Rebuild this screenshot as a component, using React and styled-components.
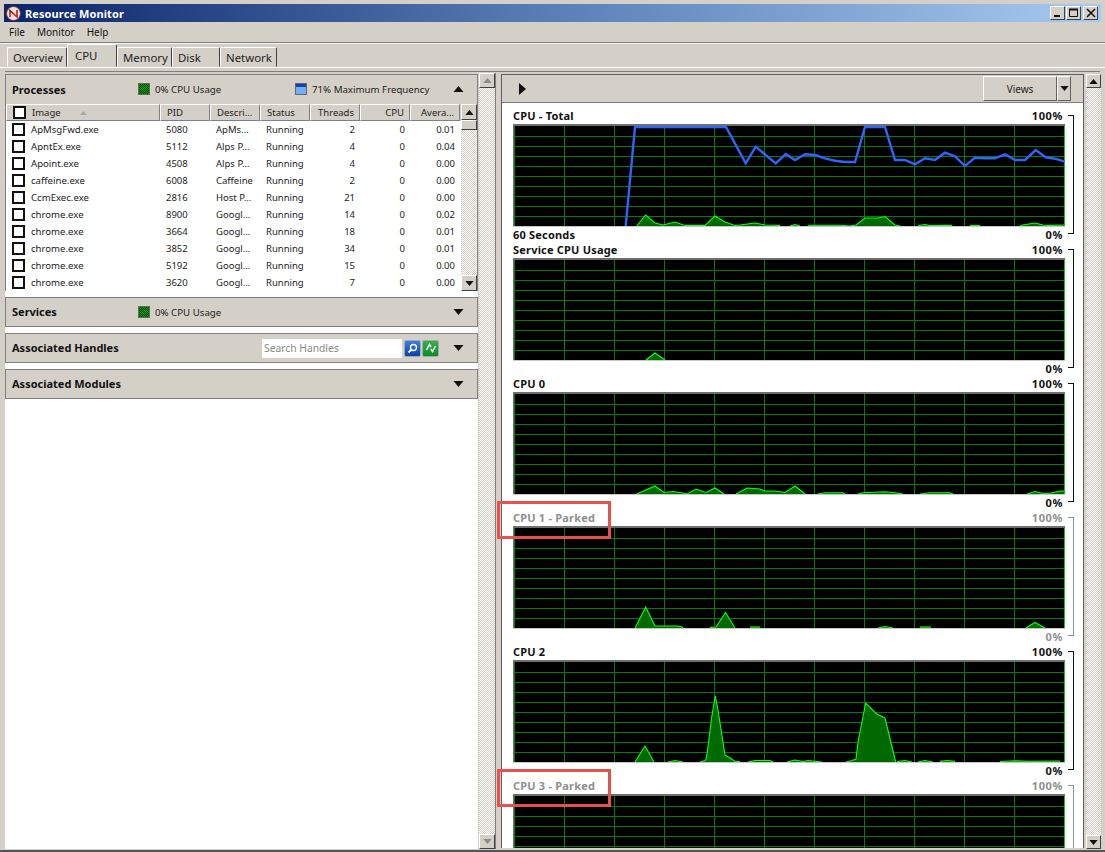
import React from "react";
import styled, { createGlobalStyle } from "styled-components";

const Global = createGlobalStyle`
  html, body { margin: 0; padding: 0; background: #d4d0c8; }
  * { box-sizing: border-box; }
`;
const FACE = "#d4d0c8";
const checker = `repeating-conic-gradient(#d4d0c8 0 25%, #ffffff 0 50%) 0 0 / 2px 2px`;

const Window = styled.div`
  width: 1105px; height: 852px; overflow: hidden; position: relative;
  background: ${FACE}; padding-top: 4px; display: flex; flex-direction: column;
  font-family: "Noto Sans", "Liberation Sans", sans-serif; font-size: 10.5px; color: #111;
  border-bottom: 2px solid #555;
`;
const TitleBar = styled.div`
  height: 18px; margin: 0 4px; flex: none; display: flex; align-items: center; padding: 0 2px;
  background: linear-gradient(90deg, #0a246a 0%, #5a7fb8 50%, #a6caf0 100%);
`;
const TitleText = styled.span`
  margin-left: 4px; color: #fff; font: bold 11px "Noto Sans", sans-serif; letter-spacing: 0.1px; flex: 1;
`;
const CaptionButton = styled.button`
  width: 15px; height: 14px; padding: 0; margin-right: ${p => p.$gap || 1}px; background: ${FACE};
  border: 1px solid; border-color: #fff #404040 #404040 #fff; display: flex; align-items: center; justify-content: center;
`;
const MenuBar = styled.div`
  height: 20px; flex: none; display: flex; align-items: center; padding-left: 9px; gap: 12px; font-size: 10px;
`;
const Separator = styled.div`
  height: 2px; flex: none; background: #808080; border-bottom: 1px solid #f4f2ee;
`;
const TabStrip = styled.div`
  height: 24px; flex: none; display: flex; align-items: flex-end; padding-left: 7px; border-bottom: 1px solid #fff;
`;
const Tab = styled.div`
  width: ${p => p.$w}px; height: ${p => p.$active ? 23 : 20}px; background: ${FACE};
  border: 1px solid; border-color: #fff #404040 ${FACE} #fff; border-radius: 2px 2px 0 0;
  padding: ${p => p.$active ? "3px 0 0 7px" : "2px 0 0 5px"}; font-size: 11.4px; line-height: 15px; color: #222;
`;
const Content = styled.div`
  flex: 1; min-height: 0; display: flex; padding: 5px 5px 1px 5px; position: relative;
  &::before { content: ""; position: absolute; left: 5px; right: 5px; top: 3px; height: 1px; background: #808080; }
`;
const LeftColumn = styled.div`
  width: 473px; flex: none; background: #fff; display: flex; flex-direction: column; gap: 6px; margin-top: 1px;
`;
const PanelHeader = styled.div`
  height: ${p => p.$h || 30}px; flex: none; display: flex; align-items: center; background: ${FACE};
  border: 1px solid #808080; padding: 0 13px 0 6px; ${p => p.$flat && "border-width: 1px 1px 0 1px;"}
`;
const PanelTitle = styled.span`
  font: bold 11px "Noto Sans", sans-serif; width: ${p => p.$w ? p.$w + "px" : "auto"}; color: #111; flex: none;
  margin-bottom: ${p => p.$raised ? 2 : 0}px;
`;
const Swatch = styled.span`
  width: 12px; height: 12px; flex: none; margin-right: 5px; border: 1px solid #666;
  background: ${p => p.$blue
    ? "linear-gradient(#1a3cb0 0 3px, #6fb0f5 3px)"
    : "repeating-conic-gradient(#004a00 0 25%, #00a000 0 50%) 0 0 / 2px 2px"};
`;
const Meter = styled.span`
  width: ${p => p.$w}px; flex: none; font-size: 9.7px; color: #222; white-space: nowrap;
`;
const Spring = styled.span`flex: 1;`;
const Gap = styled.span`flex: none; width: ${p => p.$w}px;`;
const Processes = styled.div`
  flex: none; display: flex; flex-direction: column; border-bottom: 1px solid #808080;
`;
const TableFrame = styled.div`
  display: grid; grid-template-columns: 1fr 16px; height: 187px;
  border: 1px solid #808080; border-width: 0 1px; padding-top: 1px; background: ${FACE};
`;
const TableBody = styled.div`background: #fff; min-width: 0;`;
const Cols = "154px 50px 50px 50px 50px 50px 50px";
const HeadRow = styled.div`
  display: grid; grid-template-columns: ${Cols}; height: 17px; background: ${FACE};
`;
const HeadCell = styled.div`
  display: flex; align-items: center; padding: 0 5px 0 6px; font-size: 9.5px; color: #222; white-space: nowrap;
  border: 1px solid; border-color: #fff #808080 #808080 #fff; justify-content: ${p => p.$right ? "flex-end" : "flex-start"};
`;
const Row = styled.div`
  display: grid; grid-template-columns: ${Cols}; height: 17px; align-items: center; background: #fff;
`;
const Cell = styled.div`
  padding: 0 5px 0 6px; font-size: 9.5px; color: #1c1c1c; white-space: nowrap; text-align: ${p => p.$right ? "right" : "left"};
`;
const NameCell = styled.div`
  display: flex; align-items: center; padding-left: 6px; font-size: 9.6px; color: #1c1c1c;
`;
const Check = styled.span`
  width: 13px; height: 13px; border: 2px solid #111; background: #fff; margin-right: 6px; flex: none;
`;
const SortArrow = styled.svg`margin-left: 19px;`;
const ScrollV = styled.div`
  display: flex; flex-direction: column; background: ${checker}; width: ${p => p.$w || 16}px; flex: none;
`;
const ScrollBtn = styled.div`
  height: ${p => p.$h || 16}px; flex: none; background: ${FACE}; display: flex; align-items: center; justify-content: center;
  border: 1px solid; border-color: #fff #404040 #404040 #fff;
`;
const ScrollFill = styled.div`flex: 1;`;
const SearchBox = styled.div`
  width: 140px; height: 19px; background: #fff; margin-right: 1px; padding-left: 2px;
  font-size: 10.3px; color: #8a8a8a; display: flex; align-items: center; flex: none;
`;
const SquareIcon = styled.span`
  width: 17px; height: 17px; flex: none; margin-left: 1px; border-radius: 2px; border: 1px solid #9ab;
  background: ${p => p.$green ? "linear-gradient(#37b24a,#0f8a22)" : "linear-gradient(#3d7ee0,#0f3fa8)"};
  display: flex; align-items: center; justify-content: center;
`;
const LeftScroll = styled(ScrollV)`
  margin-left: 1px; border-right: 1px solid #808080; width: 17px;
`;
const RightPane = styled.div`
  width: 583px; flex: none; margin: 1px 0 0 5px; background: #fff;
  border: 1px solid #5e5e5e; border-width: 1px 1px 0 1px; overflow: hidden; height: 774px; display: flex; flex-direction: column;
`;
const PaneBar = styled.div`
  height: 28px; flex: none; background: ${FACE}; border-bottom: 1px solid #808080; display: flex; align-items: center;
  padding: 0 12px 0 17px;
`;
const ViewsButton = styled.div`
  margin-left: auto; display: flex; height: 25px; font-size: 10px; color: #222;
`;
const ViewsMain = styled.div`
  width: 74px; display: flex; align-items: center; justify-content: center; background: ${FACE};
  border: 1px solid; border-color: #fff #606060 #606060 #fff;
`;
const ViewsDrop = styled.div`
  width: 14px; display: flex; align-items: center; justify-content: center; background: ${FACE};
  border: 1px solid; border-color: #fff #606060 #606060 #fff;
`;
const GraphList = styled.div`
  padding: 4px 0 0 11px; flex: 1; min-height: 0; overflow: hidden;
`;
const GraphBlock = styled.div`
  height: 134px; display: grid; grid-template-columns: 552px 6px; column-gap: 3px;
`;
const GraphMain = styled.div`display: flex; flex-direction: column;`;
const GraphLine = styled.div`
  height: ${p => p.$h}px; display: flex; justify-content: space-between; align-items: center; padding-right: 2px;
  font: bold 11px/12px "Noto Sans", sans-serif; letter-spacing: 0.2px; color: ${p => p.$parked ? "#8f8f8f" : "#111"};
  padding-top: ${p => p.$down ? 2 : 0}px;
`;
const Pct = styled.span`letter-spacing: 0.6px;`;
const Axis = styled.div`
  margin-top: 8px; height: 119px; border: 1px solid ${p => p.$parked ? "#8f8f8f" : "#111"}; border-left: 0;
`;
const Plot = styled.svg`display: block; flex: none;`;
const RightScroll = styled(ScrollV)`margin-left: 2px; margin-top: 1px; height: 775px;`;
const Callout = styled.div`
  position: absolute; left: 497px; top: ${p => p.$top}px; width: 114px; height: 38px;
  border: 3px solid #e8504c; pointer-events: none;
`;

const Tri = ({ up, c = "#111", w = 11, h = 6 }) => (
  <svg width={w} height={h} viewBox="0 0 10 6" style={{ display: "block", flex: "none" }}>
    <polygon points={up ? "5,0 10,6 0,6" : "0,0 10,0 5,6"} fill={c} />
  </svg>
);

const rows = [
  ["ApMsgFwd.exe", "5080", "ApMs...", "2", "0.01"],
  ["ApntEx.exe", "5112", "Alps P...", "4", "0.04"],
  ["Apoint.exe", "4508", "Alps P...", "4", "0.00"],
  ["caffeine.exe", "6008", "Caffeine", "2", "0.00"],
  ["CcmExec.exe", "2816", "Host P...", "21", "0.00"],
  ["chrome.exe", "8900", "Googl...", "14", "0.02"],
  ["chrome.exe", "3664", "Googl...", "18", "0.01"],
  ["chrome.exe", "3852", "Googl...", "34", "0.01"],
  ["chrome.exe", "5192", "Googl...", "15", "0.00"],
  ["chrome.exe", "3620", "Googl...", "7", "0.00"],
];

const blueTotal = [[625.7,226],[635,127],[726,127],[745.7,163.3],[755.7,146.7],[775.7,163.3],[785.7,154],[795,160],[805,154.3],[815,155],[825,158.3],[835,160.7],[845,162],[855,162],[865,127],[885,127],[895,160],[905,160],[915,164.3],[925,158.3],[935,160],[945,152.7],[955,156.3],[965,166],[975,157.7],[985,158.3],[995,158.3],[1005,154.3],[1015,160],[1025,160],[1035.7,150],[1045.7,157.3],[1055,158.7],[1065,161.7]];

const graphs = [
  { label: "CPU - Total", footer: "60 Seconds", blue: blueTotal, segs: [
    [[636.7,0],[645.7,11],[655,3],[663,1],[675,4],[685,.6],[705,.6],[715,10],[725,4],[735,.6],[740,1],[755,3],[765,1],[780,.6]],
    [[790,0],[795,1.5],[800,0]],
    [[808,.8],[840,.8],[850,0],[856,1],[865,8],[878,8],[885,9.5],[895,1],[900,0]],
    [[918,.5],[925,1.5],[930,.5],[945,.6],[952,.6]],
    [[970,.6],[980,.6]],
    [[1020,.5],[1035,3],[1043,1],[1048,.6],[1065,1]],
  ]},
  { label: "Service CPU Usage", segs: [[[646,0],[655,7],[665,0]]] },
  { label: "CPU 0", segs: [
    [[636.7,0],[655,8],[664,1.5],[673,2.5],[683,1],[687,0],[696,5],[706,1.5],[715,6],[724,0]],
    [[736,0],[747,6],[760,5],[765,3],[775,3],[785,1.5],[795,8],[805,0]],
    [[818,0],[825,1.2],[843,1.2],[845,0]],
    [[858,0],[863,1.2],[885,2.2],[895,1.2],[903,0]],
    [[920,0],[930,1.2],[950,1.2],[953,0]],
    [[1027,0],[1035,2.5],[1042,.8],[1050,.8],[1060,3],[1065,3]],
  ]},
  { label: "CPU 1 - Parked", parked: true, segs: [
    [[635,0],[645.7,21],[655,2],[678,2],[683,.6]],
    [[710,.6],[716,1],[725.5,15.5],[735,0]],
    [[750,1],[760,1]],
    [[878,0],[885,1.5],[893,0]],
    [[920,1],[931,1]],
    [[1026,0],[1035,5.5],[1045,0]],
  ]},
  { label: "CPU 2", segs: [
    [[635,0],[645,16],[654,0]],
    [[668,0],[675,1.5],[683,0]],
    [[700,0],[705,1.5],[706,3],[707.3,10],[711.7,45],[715.3,66],[718.3,50],[725,7],[730,4],[735,.8],[740,.4]],
    [[748,0],[755,1.5],[770,1.5],[773,0]],
    [[787,0],[795,2],[803,.5],[808,1.5],[822,0]],
    [[846,0],[852,1.5],[856,3],[858,20],[865.7,59],[876.7,48],[885,44],[895.7,0]],
    [[897,.5],[905,1.5],[912,0]],
    [[918,0],[925,1.5],[933,0]],
    [[940,.6],[947,1.5],[955,.6]],
    [[1000,.5],[1015,1.2],[1030,.8],[1060,1]],
  ]},
  { label: "CPU 3 - Parked", parked: true, clipped: true, segs: [] },
];

const vLines = Array.from({ length: 12 }, (_, i) => 1.5 + i * 50);
const hLines = Array.from({ length: 10 }, (_, i) => 2.5 + i * 10).slice(1);

const CpuPlot = ({ segs, blue }) => (
  <Plot width="552" height="103" viewBox="0 0 552 103">
    <rect width="552" height="103" fill="#000" />
    <g stroke="#057d05" strokeWidth="1" shapeRendering="crispEdges">
      {vLines.map(x => <line key={x} x1={x} x2={x} y1="0" y2="103" />)}
      {hLines.map(y => <line key={y} x1="0" x2="552" y1={y} y2={y} />)}
    </g>
    {segs.map((s, i) => {
      const pts = s.map(([x, h]) => `${(x - 513).toFixed(1)},${(102 - h).toFixed(1)}`);
      const first = s[0][0] - 513, last = s[s.length - 1][0] - 513;
      return (
        <g key={i}>
          <polygon points={`${first},102 ${pts.join(" ")} ${last},102`} fill="#006a00" />
          <polyline points={pts.join(" ")} fill="none" stroke="#12ff12" strokeWidth="1.1" />
        </g>
      );
    })}
    <line x1="551.5" x2="551.5" y1="0" y2="103" stroke="#16c416" shapeRendering="crispEdges" />
    {blue && (
      <polyline points={blue.map(([x, y]) => `${x - 513},${y - 124}`).join(" ")} fill="none" stroke="#3163ff" strokeWidth="2.4" />
    )}
    <rect x="0" y="0" width="552" height="2" fill="#6f6f6f" />
    <rect x="0" y="0" width="1" height="103" fill="#6f6f6f" />
    <rect x="0" y="102" width="552" height="1" fill="#c8c8c8" />
  </Plot>
);

const Graph = ({ g }) => (
  <GraphBlock>
    <GraphMain>
      <GraphLine $h={17} $parked={g.parked}><span>{g.label}</span><Pct>100%</Pct></GraphLine>
      <CpuPlot segs={g.segs} blue={g.blue} />
      {!g.clipped && (
        <GraphLine $h={14} $down $parked={g.parked}><span>{g.footer || ""}</span><Pct>0%</Pct></GraphLine>
      )}
    </GraphMain>
    <Axis $parked={g.parked} />
  </GraphBlock>
);

const LogoIcon = () => (
  <svg width="15" height="15" viewBox="0 0 15 15" style={{ flex: "none" }}>
    <circle cx="7.5" cy="7.5" r="7" fill="#e8e4de" stroke="#7a2a2a" strokeWidth=".9" />
    <path d="M4 11V4.5L11 11V4" fill="none" stroke="#c62020" strokeWidth="1.6" />
    <path d="M2.5 3.5L7 7" stroke="#333" strokeWidth=".8" />
  </svg>
);

export default function App() {
  return (
    <Window>
      <Global />
      <TitleBar>
        <LogoIcon />
        <TitleText>Resource Monitor</TitleText>
        <CaptionButton aria-label="Minimize">
          <svg width="10" height="10"><rect x="1" y="7" width="6" height="2" fill="#111" /></svg>
        </CaptionButton>
        <CaptionButton aria-label="Maximize" $gap={2}>
          <svg width="10" height="10"><path d="M.5 1.5h8v7h-8z" fill="none" stroke="#111" /><rect y="0.5" width="9" height="2" fill="#111" /></svg>
        </CaptionButton>
        <CaptionButton aria-label="Close" $gap={1}>
          <svg width="10" height="10"><path d="M1 1L9 9M9 1L1 9" stroke="#111" strokeWidth="1.6" /></svg>
        </CaptionButton>
      </TitleBar>
      <MenuBar><span>File</span><span>Monitor</span><span>Help</span></MenuBar>
      <Separator />
      <TabStrip>
        <Tab $w={60}>Overview</Tab>
        <Tab $w={50} $active>CPU</Tab>
        <Tab $w={55}>Memory</Tab>
        <Tab $w={48}>Disk</Tab>
        <Tab $w={57}>Network</Tab>
      </TabStrip>
      <Content>
        <LeftColumn>
          <Processes>
            <PanelHeader $h={29} $flat>
              <PanelTitle $w={126}>Processes</PanelTitle>
              <Swatch />
              <Meter $w={140}>0% CPU Usage</Meter>
              <Swatch $blue />
              <Meter $w={134}>71% Maximum Frequency</Meter>
              <Spring />
              <Tri up />
            </PanelHeader>
            <TableFrame>
              <TableBody>
                <HeadRow>
                  <HeadCell>
                    <Check />Image
                    <SortArrow width="7" height="4" viewBox="0 0 7 4"><polygon points="3.5,0 7,4 0,4" fill="#aaa" /></SortArrow>
                  </HeadCell>
                  <HeadCell>PID</HeadCell>
                  <HeadCell>Descri...</HeadCell>
                  <HeadCell>Status</HeadCell>
                  <HeadCell $right>Threads</HeadCell>
                  <HeadCell $right>CPU</HeadCell>
                  <HeadCell $right>Avera...</HeadCell>
                </HeadRow>
                {rows.map(r => (
                  <Row key={r[1]}>
                    <NameCell><Check />{r[0]}</NameCell>
                    <Cell>{r[1]}</Cell>
                    <Cell>{r[2]}</Cell>
                    <Cell>Running</Cell>
                    <Cell $right>{r[3]}</Cell>
                    <Cell $right>0</Cell>
                    <Cell $right>{r[4]}</Cell>
                  </Row>
                ))}
              </TableBody>
              <ScrollV>
                <ScrollBtn><Tri up w={9} h={5} /></ScrollBtn>
                <ScrollBtn $h={10} />
                <ScrollFill />
                <ScrollBtn><Tri w={9} h={5} /></ScrollBtn>
              </ScrollV>
            </TableFrame>
          </Processes>
          <PanelHeader>
            <PanelTitle $w={126} $raised>Services</PanelTitle>
            <Swatch />
            <Meter $w={100}>0% CPU Usage</Meter>
            <Spring />
            <Tri />
          </PanelHeader>
          <PanelHeader>
            <PanelTitle $raised>Associated Handles</PanelTitle>
            <Spring />
            <SearchBox>Search Handles</SearchBox>
            <SquareIcon>
              <svg width="11" height="11" viewBox="0 0 11 11"><circle cx="6.5" cy="4.5" r="3" fill="none" stroke="#fff" strokeWidth="1.4" /><path d="M4.5 6.5L1.5 9.5" stroke="#fff" strokeWidth="1.8" /></svg>
            </SquareIcon>
            <SquareIcon $green>
              <svg width="12" height="12" viewBox="0 0 12 12"><path d="M1.5 8L4.5 2.5L6 5M10.5 4L7.5 9.5L6 7" fill="none" stroke="#fff" strokeWidth="1.5" /></svg>
            </SquareIcon>
            <Gap $w={14} />
            <Tri />
          </PanelHeader>
          <PanelHeader>
            <PanelTitle $raised>Associated Modules</PanelTitle>
            <Spring />
            <Tri />
          </PanelHeader>
        </LeftColumn>
        <LeftScroll>
          <ScrollBtn $h={15}><Tri up c="#8a8a8a" w={9} h={5} /></ScrollBtn>
          <ScrollFill />
          <ScrollBtn $h={15}><Tri c="#8a8a8a" w={9} h={5} /></ScrollBtn>
        </LeftScroll>
        <RightPane>
          <PaneBar>
            <svg width="8" height="12" viewBox="0 0 8 12"><polygon points="0,0 7,6 0,12" fill="#111" /></svg>
            <ViewsButton>
              <ViewsMain>Views</ViewsMain>
              <ViewsDrop><Tri w={9} h={5} /></ViewsDrop>
            </ViewsButton>
          </PaneBar>
          <GraphList>
            {graphs.map(g => <Graph key={g.label} g={g} />)}
          </GraphList>
        </RightPane>
        <RightScroll $w={15}>
          <ScrollBtn $h={14}><Tri up w={9} h={5} /></ScrollBtn>
          <ScrollFill />
          <ScrollBtn $h={14}><Tri w={9} h={5} /></ScrollBtn>
        </RightScroll>
      </Content>
      <Callout $top={501} />
      <Callout $top={769} />
    </Window>
  );
}
